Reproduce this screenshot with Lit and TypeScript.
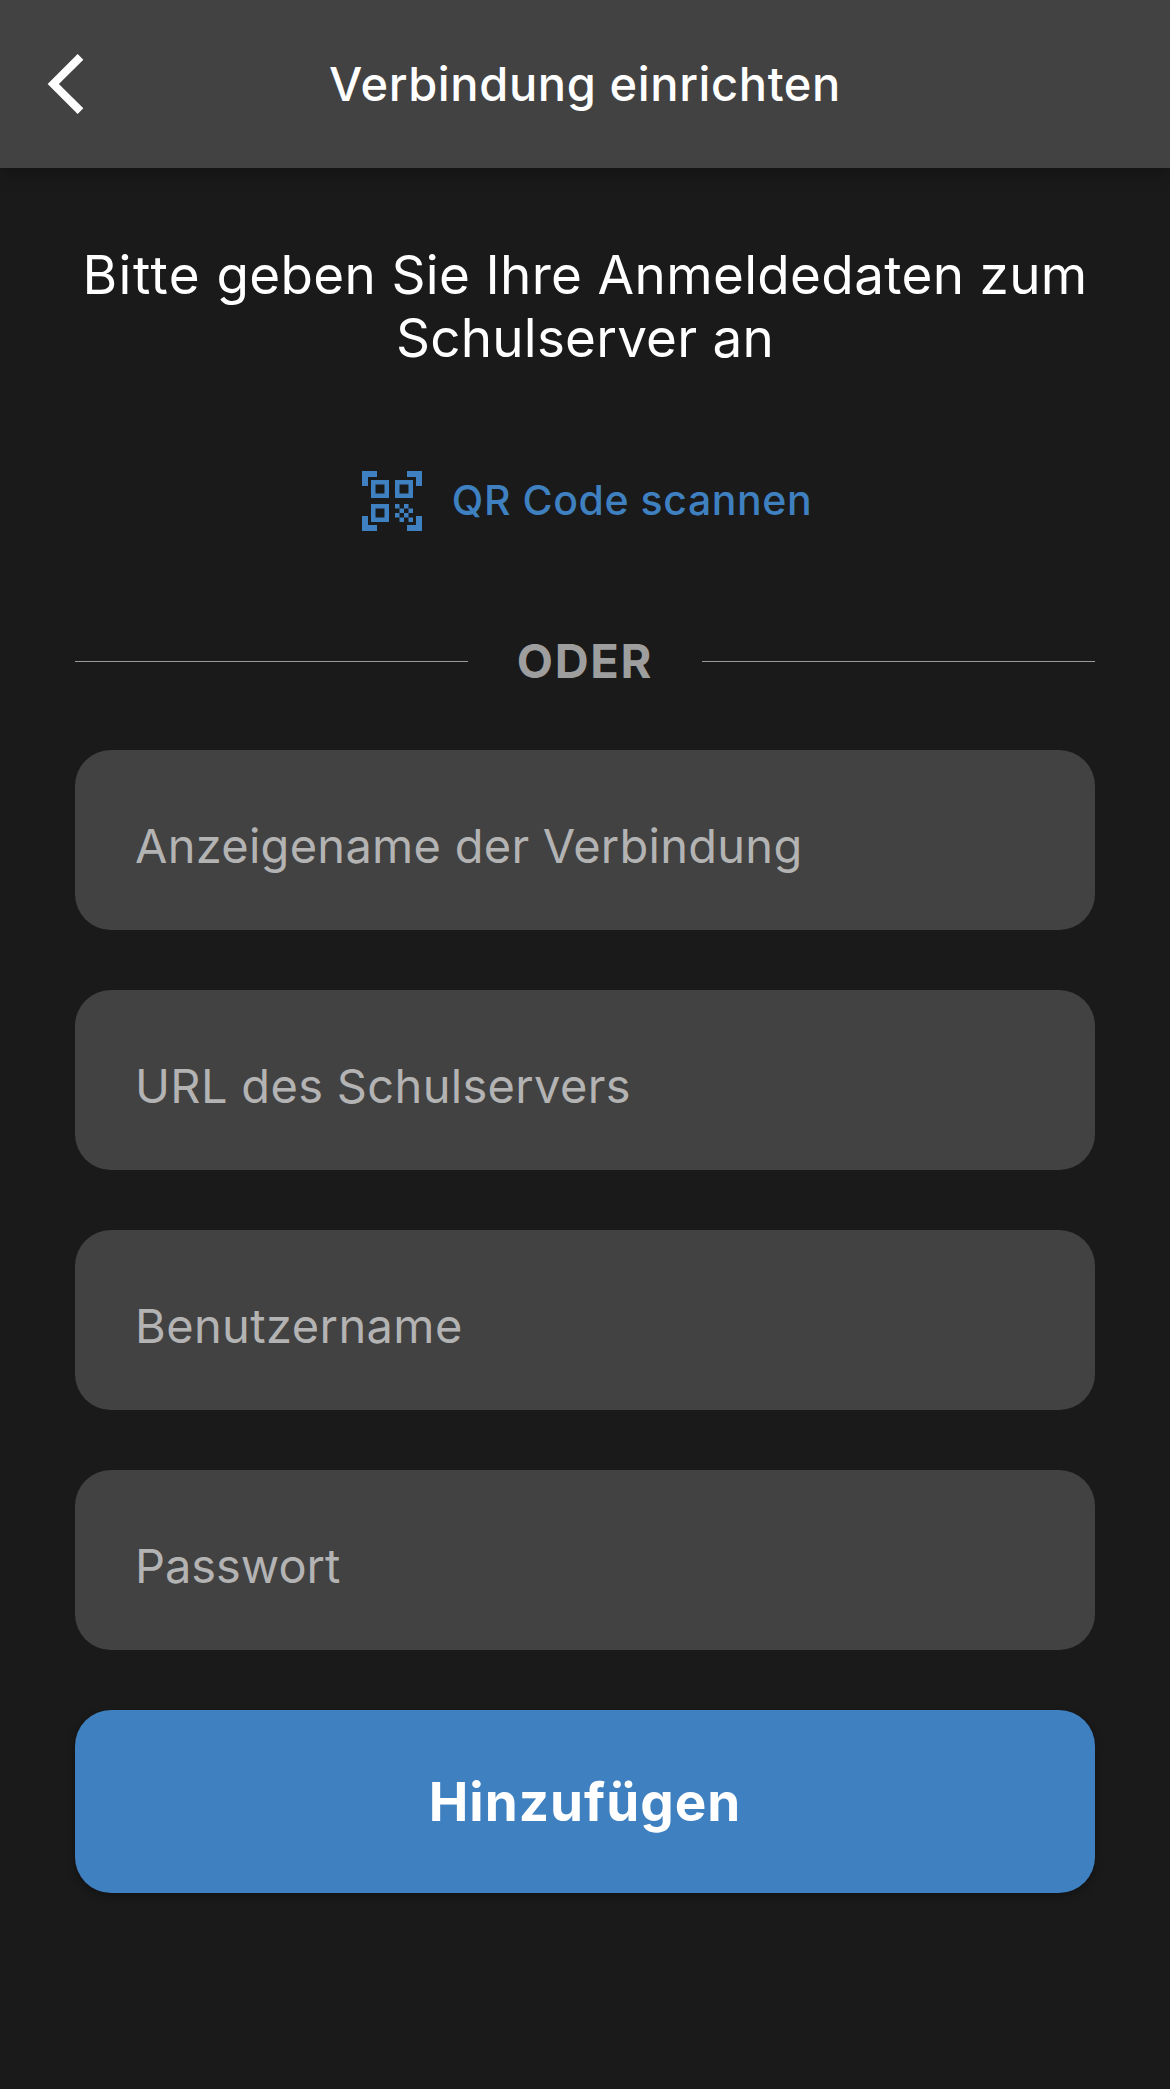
import { LitElement, html, css } from "lit";
import { customElement } from "lit/decorators.js";

@customElement("app-root")
export class AppRoot extends LitElement {
  static styles = css`
    :host { display: block; height: 2089px; background: #1a1a1a; color: #fff; font-family: Inter, "Liberation Sans", sans-serif; }
    * { box-sizing: border-box; }
    header { height: 168px; background: #424242; display: grid; grid-template-columns: 168px 1fr 168px; align-items: center; box-shadow: 0 6px 15px rgba(0,0,0,.25); }
    .back { display: flex; padding: 0; border: 0; background: none; margin-left: 46px; width: 40px; }
    .title { margin: 0; padding-bottom: 1px; text-align: center; font-size: 47px; font-weight: 500; line-height: 60px; letter-spacing: .62px; white-space: nowrap; }
    main { padding: 76px 75px 0; display: flex; flex-direction: column; }
    .intro { margin: 0; font-size: 53px; line-height: 63px; font-weight: 400; text-align: center; }
    .line { display: block; white-space: nowrap; letter-spacing: .34px; }
    .line + .line { letter-spacing: .2px; }
    .wide { letter-spacing: 1.5px; }
    .qr { display: flex; align-items: center; align-self: center; gap: 24px; height: 72px; margin-top: 95px; padding: 0 2px 0 0; border: 0; background: none; color: #3f80c0; font: 500 41px/60px Inter, sans-serif; letter-spacing: .57px; }
    .qr-label { padding-bottom: 2px; }
    .or { display: flex; align-items: center; gap: 49px; margin-top: 92px; height: 64px; color: #9e9e9e; font-size: 47px; font-weight: 700; letter-spacing: 1.7px; }
    .or-label { padding-bottom: 1px; }
    .rule { flex: 1; height: 1px; background: #9a9a9a; }
    form { display: flex; flex-direction: column; gap: 60px; margin-top: 57px; }
    .field { height: 180px; padding: 11px 60px 0; border: 0; border-radius: 36px; background: #424242; color: #fff; font: 400 47px/60px Inter, sans-serif; letter-spacing: .27px; outline: 0; }
    .field:nth-of-type(2) { letter-spacing: .33px; }
    .field:nth-of-type(3) { letter-spacing: .4px; }
    .field:nth-of-type(4) { letter-spacing: -.05px; }
    .field::placeholder { color: #b3b3b3; opacity: 1; }
    .submit { height: 183px; padding: 0; border: 0; border-radius: 36px; background: #3f80c0; color: #fff; font: 700 53px/64px Inter, sans-serif; letter-spacing: 1px; box-shadow: 0 3px 8px rgba(0,0,0,.3); }
  `;

  render() {
    const fields = ["Anzeigename der Verbindung", "URL des Schulservers", "Benutzername", "Passwort"];
    return html`
      <header>
        <button class="back" aria-label="Zurück"><svg width="40" height="60" viewBox="0 0 40 60"><path d="M34.500 2.800 7.300 30l27.200 27.200" fill="none" stroke="#fff" stroke-width="8" /></svg></button>
        <h1 class="title">Verbindung einrichten</h1>
      </header>
      <main>
        <p class="intro"><span class="line"><span class="wide">Bitte</span> geben Sie Ihre Anmeldedaten zum</span><span class="line">Schulserver an</span></p>
        <button class="qr"><svg width="72" height="72" viewBox="0 0 24 24"><path fill="currentColor" d="M9.500 6.500v3h-3v-3h3M11 5H5v6h6V5zm-1.500 9.500v3h-3v-3h3M11 13H5v6h6v-6zm6.500-6.500v3h-3v-3h3M19 5h-6v6h6V5zm-6 8h1.500v1.500H13V13zm1.500 1.500H16V16h-1.500v-1.500zM16 13h1.500v1.500H16V13zm-3 3h1.500v1.500H13V16zm1.500 1.500H16V19h-1.500v-1.500zM16 16h1.500v1.500H16V16zm1.500-1.500H19V16h-1.500v-1.500zm0 3H19V19h-1.500v-1.500zM22 7h-2V4h-3V2h5v5zm0 15v-5h-2v3h-3v2h5zM2 22h5v-2H4v-3H2v5zM2 2v5h2V4h3V2H2z"/></svg><span class="qr-label">QR Code scannen</span></button>
        <div class="or"><span class="rule"></span><span class="or-label">ODER</span><span class="rule"></span></div>
        <form>
          ${fields.map((f) => html`<input class="field" placeholder=${f} />`)}
          <button class="submit" type="button">Hinzufügen</button>
        </form>
      </main>`;
  }
}
